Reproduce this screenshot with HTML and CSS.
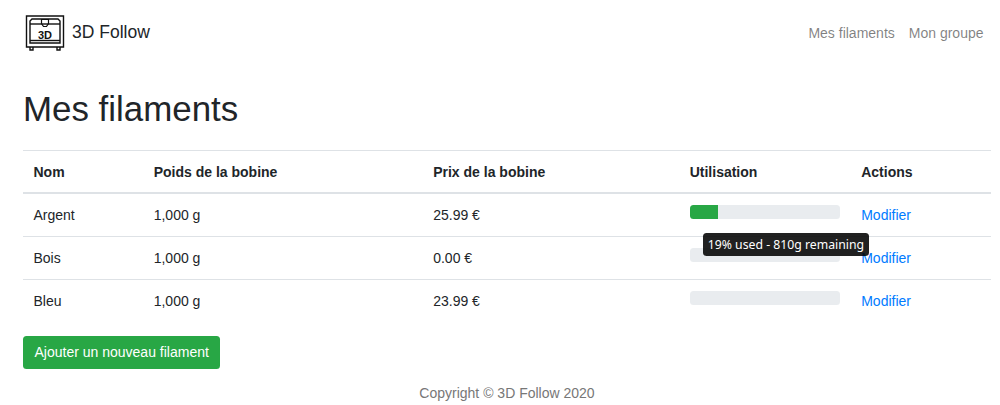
FILE: index.html
```html
<!DOCTYPE html>
<html lang="fr">
<head>
<meta charset="utf-8">
<title>3D Follow</title>
<link rel="stylesheet" href="styles.css">
</head>
<body>
<nav class="navbar">
  <a class="brand" href="#">
    <svg class="logo" viewBox="0 0 40 36" width="40" height="36" fill="none" stroke="#111" stroke-width="1.4">
      <path d="M1.500 1h37v31h-37z"/>
      <path d="M5 10v-4l2-2h26l2 2v22h-30z"/>
      <path d="M5 9h30"/>
      <path d="M5 25.500h30"/>
      <path d="M16.500 4.500h7v4l-2 3h-3l-2-3z" stroke-width="1.200"/>
      <path d="M5 32v3h3v-3M32 32v3h3v-3"/>
      <text x="20" y="23.500" text-anchor="middle" class="logo-text">3D</text>
    </svg>
    <span>3D Follow</span>
  </a>
  <div class="nav-links">
    <a href="#">Mes filaments</a>
    <a href="#">Mon groupe</a>
  </div>
</nav>
<main class="container">
  <h1>Mes filaments</h1>
  <table class="table">
    <thead>
      <tr><th class="c1">Nom</th><th class="c2">Poids de la bobine</th><th class="c3">Prix de la bobine</th><th class="c4">Utilisation</th><th>Actions</th></tr>
    </thead>
    <tbody>
      <tr>
        <td>Argent</td><td>1,000 g</td><td>25.99 €</td>
        <td class="usage">
          <div class="progress"><div class="bar" style="width:19%"></div></div>
          <div class="tooltip">19% used - 810g remaining</div>
        </td>
        <td><a href="#">Modifier</a></td>
      </tr>
      <tr>
        <td>Bois</td><td>1,000 g</td><td>0.00 €</td>
        <td class="usage"><div class="progress"></div></td>
        <td><a href="#">Modifier</a></td>
      </tr>
      <tr>
        <td>Bleu</td><td>1,000 g</td><td>23.99 €</td>
        <td class="usage"><div class="progress"></div></td>
        <td><a href="#">Modifier</a></td>
      </tr>
    </tbody>
  </table>
  <a class="btn" href="#">Ajouter un nouveau filament</a>
</main>
<footer class="footer">Copyright © 3D Follow 2020</footer>
</body>
</html>
```
FILE: styles.css
```css
* { box-sizing: border-box; }
html, body { margin: 0; padding: 0; }
body {
  font-family: "Liberation Sans", Arial, sans-serif;
  font-size: 14px;
  line-height: 1.5;
  color: #212529;
  background: #fff;
  height: 405px;
  overflow: hidden;
}
a { color: #007bff; text-decoration: none; }
.navbar {
  display: flex;
  justify-content: space-between;
  align-items: center;
  padding: 15px 16.500px 0 25px;
  height: 66px;
}
.brand {
  display: flex;
  align-items: center;
  gap: 7px;
  color: #212529;
  font-size: 17.500px;
  margin-top: -1px;
  margin-bottom: 15px;
}
.logo { display: block; }
.logo-text {
  font-family: "Liberation Sans", Arial, sans-serif;
  font-size: 11px;
  font-weight: 700;
  fill: #111;
  stroke: none;
}
.nav-links { display: flex; gap: 14px; margin-bottom: 14px; }
.nav-links a { color: rgba(0,0,0,.5); }
.container { padding: 0 9px 0 23px; }
h1 {
  margin: 0;
  padding-top: 22px;
  height: 84px;
  font-size: 34.900px;
  font-weight: 400;
  line-height: 42px;
}
.table {
  width: 100%;
  border-collapse: collapse;
  table-layout: fixed;
}
.table th, .table td {
  text-align: left;
  padding: 10.500px;
  vertical-align: top;
  border-top: 1px solid #dee2e6;
}
.table th { font-weight: 700; padding-bottom: 9.500px; border-bottom: 2px solid #dee2e6; }
.c1 { width: 120.200px; }
.c2 { width: 279.500px; }
.c3 { width: 256.500px; }
.c4 { width: 171.500px; }
.usage { position: relative; }
.progress {
  height: 14px;
  margin-top: 0;
  background: #e9ecef;
  border-radius: 3.500px;
  overflow: hidden;
}
.bar { height: 100%; background: #28a745; }
.tooltip {
  position: absolute;
  left: 24px;
  top: 39px;
  padding: 2.500px 4.500px;
  background: rgba(0,0,0,.87);
  border-radius: 3.500px;
  color: #fff;
  font-family: "Noto Sans", sans-serif;
  font-size: 12.250px;
  line-height: 18.400px;
  white-space: nowrap;
  z-index: 2;
}
.btn {
  display: inline-block;
  margin-top: 14px;
  padding: 6px 11.500px;
  height: 33px;
  background: #28a745;
  border-radius: 3.500px;
  color: #fff;
  line-height: 21px;
}
.footer {
  margin-top: 14px;
  text-align: center;
  color: #777;
  margin-left: 14px;
}
```
